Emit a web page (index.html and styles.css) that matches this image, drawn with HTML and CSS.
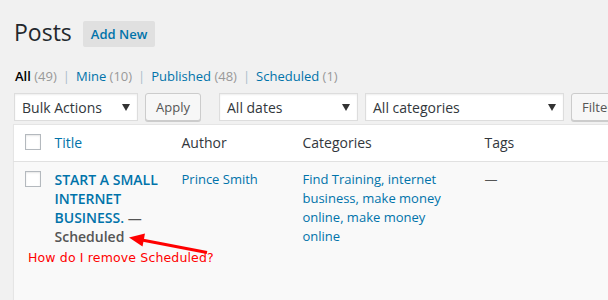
FILE: index.html
```html
<!DOCTYPE html>
<html>
<head>
<meta charset="utf-8">
<link rel="stylesheet" href="styles.css">
</head>
<body>
<div class="wrap">
  <div class="page-head">
    <h1 class="page-title">Posts</h1>
    <a class="add-new">Add New</a>
  </div>
  <ul class="subsubsub">
    <li><a class="current">All <span class="count">(49)</span></a><span class="sep">|</span></li>
    <li><a>Mine <span class="count">(10)</span></a><span class="sep">|</span></li>
    <li><a>Published <span class="count">(48)</span></a><span class="sep">|</span></li>
    <li><a>Scheduled <span class="count">(1)</span></a></li>
  </ul>
  <div class="tablenav">
    <div class="select sel-bulk"><span>Bulk Actions</span><svg class="caret" width="8" height="7" viewBox="0 0 8 7"><path d="M0 0H8L4 7Z" fill="#333"/></svg></div>
    <button class="button">Apply</button>
    <div class="select sel-dates"><span>All dates</span><svg class="caret" width="8" height="7" viewBox="0 0 8 7"><path d="M0 0H8L4 7Z" fill="#333"/></svg></div>
    <div class="select sel-cats"><span>All categories</span><svg class="caret" width="8" height="7" viewBox="0 0 8 7"><path d="M0 0H8L4 7Z" fill="#333"/></svg></div>
    <button class="button btn-filter">Filter</button>
  </div>
  <div class="table-wrap">
    <table class="posts">
      <colgroup>
        <col class="c-cb"><col class="c-title"><col class="c-author"><col class="c-cats"><col class="c-tags">
      </colgroup>
      <thead>
        <tr>
          <th class="check"><span class="cbox"></span></th>
          <th class="sortable">Title</th>
          <th>Author</th>
          <th>Categories</th>
          <th>Tags</th>
        </tr>
      </thead>
      <tbody>
        <tr>
          <td class="check"><span class="cbox"></span></td>
          <td class="title-cell"><strong><a class="row-title">START A SMALL INTERNET BUSINESS.</a> — <span class="post-state">Scheduled</span></strong></td>
          <td><a>Prince Smith</a></td>
          <td class="cats">Find Training, internet business, make money online, make money online</td>
          <td class="dash">—</td>
        </tr>
      </tbody>
    </table>
    <svg class="arrow" width="80" height="24" viewBox="0 0 80 24">
      <line x1="79" y1="19.5" x2="14" y2="7" stroke="#f00" stroke-width="3"/>
      <path d="M1 4.5 L17 0.5 L14.5 13.5 Z" fill="#f00"/>
    </svg>
    <div class="note">How do I remove Scheduled?</div>
  </div>
</div>
</body>
</html>
```
FILE: styles.css
```css
html, body {
  margin: 0;
  padding: 0;
  background: #f1f1f1;
  overflow: hidden;
  width: 608px;
  height: 300px;
}
body {
  font-family: "Open Sans", "Noto Sans", sans-serif;
  font-size: 13px;
  color: #444;
}
.wrap {
  padding-left: 14px;
  overflow: hidden;
  height: 300px;
}
.page-head {
  display: flex;
  align-items: flex-start;
  padding-top: 18px;
}
.page-title {
  margin: 0;
  font-size: 23px;
  font-weight: 400;
  line-height: 29px;
  color: #23282d;
}
.add-new {
  margin: 3px 0 0 11px;
  padding: 4px 8px;
  line-height: 18px;
  background: #e0e0e0;
  border-radius: 2px;
  color: #0073aa;
  font-weight: 600;
  font-size: 13px;
}
.subsubsub {
  list-style: none;
  margin: 19px 0 0 1px;
  padding: 0;
  display: flex;
  line-height: 20px;
  font-size: 13px;
}
.subsubsub a {
  color: #0073aa;
}
.subsubsub a.current {
  color: #000;
  font-weight: 600;
}
.count {
  color: #999;
  font-weight: 400;
}
.sep {
  color: #a9bccb;
  margin: 0 6px 0 6px;
}
.tablenav {
  display: flex;
  margin-top: 7px;
  height: 28px;
}
.tablenav > * {
  flex: none;
}
.select {
  box-sizing: border-box;
  height: 28px;
  background: #fff;
  border: 1px solid #ddd;
  box-shadow: inset 0 1px 2px rgba(0,0,0,0.07);
  display: flex;
  align-items: center;
  justify-content: space-between;
  padding: 0 7px 0 7px;
  font-size: 14px;
  color: #32373c;
}
.caret {
  display: block;
}
.sel-bulk { width: 124px; }
.sel-dates { width: 139px; margin-left: 18px; }
.sel-cats { width: 199px; margin-left: 7px; }
.button {
  box-sizing: border-box;
  height: 28px;
  margin-left: 7px;
  padding: 0 10px 1px;
  background: #f7f7f7;
  border: 1px solid #ccc;
  border-radius: 3px;
  box-shadow: 0 1px 0 #ccc;
  color: #555;
  font-family: "Open Sans", "Noto Sans", sans-serif;
  font-size: 13px;
  width: 56px;
  text-align: left;
}
.btn-filter {
  width: 60px;
}
.table-wrap {
  position: relative;
  margin-top: 3px;
  margin-left: -1px;
}
.posts {
  table-layout: fixed;
  border-collapse: collapse;
  width: 640px;
  background: #fff;
  border: 1px solid #e5e5e5;
  box-shadow: 0 1px 1px rgba(0,0,0,0.04);
}
.c-cb { width: 31px; }
.c-title { width: 127px; }
.c-author { width: 121px; }
.c-cats { width: 182px; }
.posts th {
  text-align: left;
  font-weight: 400;
  font-size: 14px;
  line-height: 19.6px;
  padding: 8px 10px;
  color: #32373c;
  border-bottom: 1px solid #e1e1e1;
}
.posts th.sortable {
  color: #0073aa;
}
.posts th.check, .posts td.check {
  padding: 9px 0 0 11px;
  vertical-align: top;
}
.posts td {
  vertical-align: top;
  padding: 8px 10px;
  line-height: 19.3px;
  color: #555;
  height: 160px;
}
.posts tbody tr {
  background: #f9f9f9;
}
.posts a, .posts td.cats {
  color: #0073aa;
}
.cbox {
  display: block;
  box-sizing: border-box;
  width: 16px;
  height: 16px;
  border: 1px solid #b4b9be;
  background: #fff;
  box-shadow: inset 0 1px 2px rgba(0,0,0,0.1);
}
.posts td.title-cell {
  font-size: 14px;
  line-height: 19.2px;
}
.title-cell strong {
  font-weight: 600;
}
.post-state {
  color: #555;
}
.dash {
  color: #32373c;
}
.arrow {
  position: absolute;
  left: 115px;
  top: 109px;
}
.note {
  position: absolute;
  left: 15px;
  top: 126px;
  color: #f00;
  font-family: "DejaVu Sans", sans-serif;
  font-size: 12.5px;
  line-height: 16px;
  letter-spacing: 0.15px;
}
```
